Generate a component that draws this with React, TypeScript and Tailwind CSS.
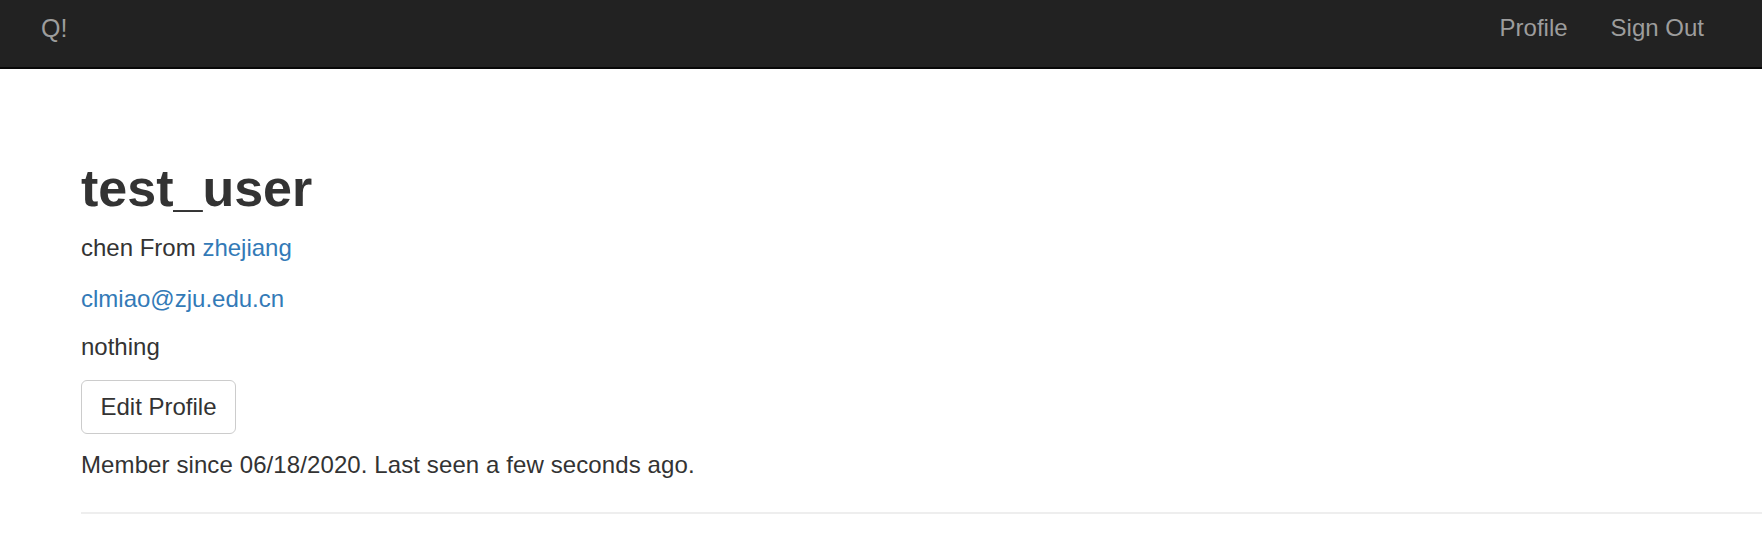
import React from "react";

export default function App() {
  return (
    <div className="min-h-[546px] w-full bg-white font-['Liberation_Sans',Arial,sans-serif] text-[#333]">
      <nav className="flex h-[69px] items-start justify-between border-b-2 border-[#080808] bg-[#222] pl-[41px] pr-[58px] pt-[11px] text-[24px] leading-[34px] text-[#9d9d9d]">
        <a className="block text-[25px]">Q!</a>
        <div className="flex gap-[43px]">
          <a className="block">Profile</a>
          <a className="block">Sign Out</a>
        </div>
      </nav>
      <main className="pl-[81px] pt-[91px]">
        <div className="border-b-2 border-[#eee] pb-[30px]">
          <h1 className="mb-[14px] text-[52px] font-bold leading-[57px] text-[#333]">
            test_user
          </h1>
          <p className="mb-[16.5px] text-[24px] leading-[34px]">
            chen From <a className="text-[#337ab7]">zhejiang</a>
          </p>
          <p className="mb-[14.5px] text-[24px] leading-[34px]">
            <a className="text-[#337ab7]">clmiao@zju.edu.cn</a>
          </p>
          <p className="mb-[16px] text-[24px] leading-[34px]">nothing</p>
          <div className="flex">
            <a className="flex h-[54px] items-center rounded-[6px] border border-[#ccc] bg-white px-[18.5px] text-[24px] leading-[34px] text-[#333]">
              Edit Profile
            </a>
          </div>
          <p className="mt-[13.5px] text-[24px] leading-[34px] tracking-[0.1px]">
            Member since 06/18/2020. Last seen a few seconds ago.
          </p>
        </div>
      </main>
    </div>
  );
}
